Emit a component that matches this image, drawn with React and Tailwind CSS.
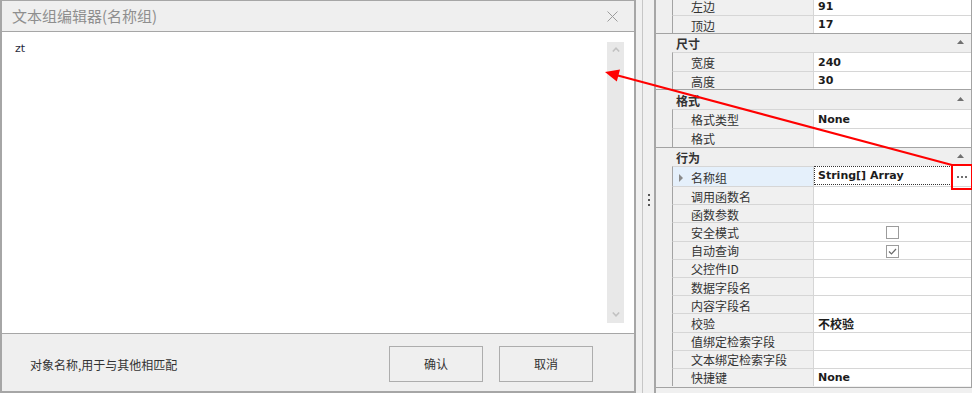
import React from "react";

const CJK = "font-['Noto_Sans_CJK_SC',sans-serif]";
const VAL = "font-['DejaVu_Sans',sans-serif] font-bold text-[11px] text-[#1c1c1c]";

const rows = [
  { t: "p", n: "左边", v: "91", h: "h-[19px]" },
  { t: "p", n: "顶边", v: "17", h: "h-[18px]" },
  { t: "c", n: "尺寸", h: "h-[19px]" },
  { t: "p", n: "宽度", v: "240", h: "h-[19px]" },
  { t: "p", n: "高度", v: "30", h: "h-[18px]" },
  { t: "c", n: "格式", h: "h-[20px]" },
  { t: "p", n: "格式类型", v: "None", h: "h-[19px]" },
  { t: "p", n: "格式", h: "h-[19px]" },
  { t: "c", n: "行为", h: "h-[19px]" },
  { t: "sel", n: "名称组", v: "String[] Array", h: "h-[20px]" },
  { t: "p", n: "调用函数名", h: "h-[18.2px]" },
  { t: "p", n: "函数参数", h: "h-[18.2px]" },
  { t: "p", n: "安全模式", cb: "off", h: "h-[18.2px]" },
  { t: "p", n: "自动查询", cb: "on", h: "h-[18.2px]" },
  { t: "p", n: "父控件ID", h: "h-[18.2px]" },
  { t: "p", n: "数据字段名", h: "h-[18.2px]" },
  { t: "p", n: "内容字段名", h: "h-[18.2px]" },
  { t: "p", n: "校验", v: "不校验", cjkv: true, h: "h-[18.2px]" },
  { t: "p", n: "值绑定检索字段", h: "h-[18.2px]" },
  { t: "p", n: "文本绑定检索字段", h: "h-[18.2px]" },
  { t: "p", n: "快捷键", v: "None", h: "h-[18.2px]" },
];

function Checkbox({ on }) {
  return (
    <div className="w-[13px] h-[13px] border border-[#9c9c9c] bg-white flex items-center justify-center">
      {on && (
        <svg width="11" height="11" viewBox="0 0 11 11">
          <path d="M2 5.5 L4.5 8 L9 3" fill="none" stroke="#6a6a6a" strokeWidth="1.2" />
        </svg>
      )}
    </div>
  );
}

function Row({ r, first }) {
  if (r.t === "c") {
    return (
      <div className={`${r.h} shrink-0 flex items-center justify-between bg-[#efefef] border-t border-[#a3a3a3] pl-[20px] pr-[7px] pt-[2px]`}>
        <span className={`${CJK} text-[12px] leading-[14px] font-bold text-[#333]`}>{r.n}</span>
        <svg width="7" height="4" viewBox="0 0 7 4" className="-mt-[4px]">
          <path d="M0 4 L3.5 0 L7 4 Z" fill="#707070" />
        </svg>
      </div>
    );
  }
  const sel = r.t === "sel";
  return (
    <div className={`${r.h} shrink-0 flex ${first ? "-mt-[4px]" : ""}`}>
      <div className="w-[16px] shrink-0 bg-[#efefef]" />
      <div
        className={`w-[142px] shrink-0 flex items-center pt-[2px] border-l border-l-[#a3a3a3] border-t border-t-[#d6d6d6] border-r border-r-[#d6d6d6] ${
          sel ? "bg-[#e5f0fb] pl-[6px]" : "bg-[#f0f0f0] pl-[18px]"
        }`}
      >
        {sel && (
          <svg width="4" height="8" viewBox="0 0 4 8" className="mr-[8px]">
            <path d="M0 0 L4 4 L0 8 Z" fill="#8a8a8a" />
          </svg>
        )}
        <span className={`${CJK} text-[12px] leading-[14px] text-[#333] whitespace-nowrap`}>{r.n}</span>
      </div>
      {sel ? (
        <div className="flex-1 flex bg-white">
          <div className="flex-1 h-[19px] flex items-center pl-[3px] pt-[2px] border border-dotted border-[#333]">
            <span className={VAL}>{r.v}</span>
          </div>
          <div className="w-[19px] h-[19px] flex items-center justify-center gap-[2px] pt-[2px]">
            <div className="w-[2px] h-[2px] bg-[#6f6f6f]" />
            <div className="w-[2px] h-[2px] bg-[#6f6f6f]" />
            <div className="w-[2px] h-[2px] bg-[#6f6f6f]" />
          </div>
        </div>
      ) : (
        <div className={`flex-1 flex items-center bg-white border-t border-t-[#d6d6d6] pt-[2px] ${r.cb ? "justify-center" : "pl-[4px]"}`}>
          {r.cb ? (
            <Checkbox on={r.cb === "on"} />
          ) : r.v ? (
            r.cjkv ? (
              <span className={`${CJK} text-[12px] leading-[14px] font-bold text-[#1c1c1c]`}>{r.v}</span>
            ) : (
              <span className={VAL}>{r.v}</span>
            )
          ) : null}
        </div>
      )}
    </div>
  );
}

export default function App() {
  return (
    <div className={`relative flex w-[972px] h-[393px] overflow-hidden bg-[#f0f0f0] ${CJK}`}>
      {/* Dialog */}
      <div className="w-[636px] h-[393px] shrink-0 flex flex-col border-t border-l-2 border-r-2 border-b-2 border-[#a6a6a6]">
        <div className="h-[31px] shrink-0 flex items-center justify-between bg-[#efefef] border-b border-[#a6a6a6] pl-[10px] pr-[16px]">
          <span className="text-[15px] leading-[18px] text-[#8e8e8e]">文本组编辑器(名称组)</span>
          <svg width="11" height="11" viewBox="0 0 11 11">
            <path d="M0.5 0.5 L10.5 10.5 M10.5 0.5 L0.5 10.5" stroke="#9c9c9c" strokeWidth="1" />
          </svg>
        </div>
        <div className="flex-1 flex bg-white">
          <div className="pl-[13px] pt-[10px] font-['DejaVu_Sans',sans-serif] text-[11px] leading-[14px] text-[#1f2a3c]">zt</div>
          <div className="ml-auto mr-[10px] my-[10px] w-[17px] bg-[#e8e8e8] flex flex-col items-center justify-between pt-[5px] pb-[6px]">
            <svg width="8" height="5" viewBox="0 0 8 5">
              <path d="M0.8 4.5 L4 1.2 L7.2 4.5" fill="none" stroke="#c2c2c2" strokeWidth="1.6" />
            </svg>
            <svg width="8" height="5" viewBox="0 0 8 5">
              <path d="M0.8 0.5 L4 3.8 L7.2 0.5" fill="none" stroke="#c2c2c2" strokeWidth="1.6" />
            </svg>
          </div>
        </div>
        <div className="h-[58px] shrink-0 flex items-center bg-[#efefef] border-t border-[#a6a6a6] pt-[3px] pl-[28px] pr-[41px]">
          <span className="text-[12px] leading-[14px] text-[#333] mt-[2px]">对象名称,用于与其他相匹配</span>
          <div className="ml-auto flex gap-[16px]">
            <div className="w-[94px] h-[36px] flex items-center justify-center border border-[#adadad] bg-[#efefef] text-[12px] text-[#333]">确认</div>
            <div className="w-[94px] h-[36px] flex items-center justify-center border border-[#adadad] bg-[#efefef] text-[12px] text-[#333]">取消</div>
          </div>
        </div>
      </div>

      {/* Splitter */}
      <div className="w-[6px] shrink-0" />
      <div className="w-[1px] shrink-0 bg-[#c6c6c6]" />
      <div className="w-[11px] shrink-0 flex flex-col items-center justify-center gap-[3px] pt-[6px]">
        <div className="w-[2px] h-[2px] bg-[#555]" />
        <div className="w-[2px] h-[2px] bg-[#555]" />
        <div className="w-[2px] h-[2px] bg-[#555]" />
      </div>

      {/* Property grid */}
      <div className="flex-1 flex flex-col border-l-2 border-[#a6a6a6]">
        <div className="h-[388px] shrink-0 overflow-hidden flex flex-col border-b border-r border-[#a3a3a3]">
          {rows.map((r, i) => (
            <Row key={i} r={r} first={i === 0} />
          ))}
        </div>
        <div className="flex-1" />
      </div>

      {/* Annotation overlay */}
      <svg className="absolute left-0 top-0 pointer-events-none" width="972" height="393" viewBox="0 0 972 393">
        <line x1="952" y1="165" x2="616" y2="75" stroke="#ff0000" strokeWidth="2" />
        <polygon points="605,72 620,69.6 616.8,81.6" fill="#ff0000" />
        <rect x="952" y="165" width="20" height="24" fill="none" stroke="#ff0000" strokeWidth="2" />
      </svg>
    </div>
  );
}
